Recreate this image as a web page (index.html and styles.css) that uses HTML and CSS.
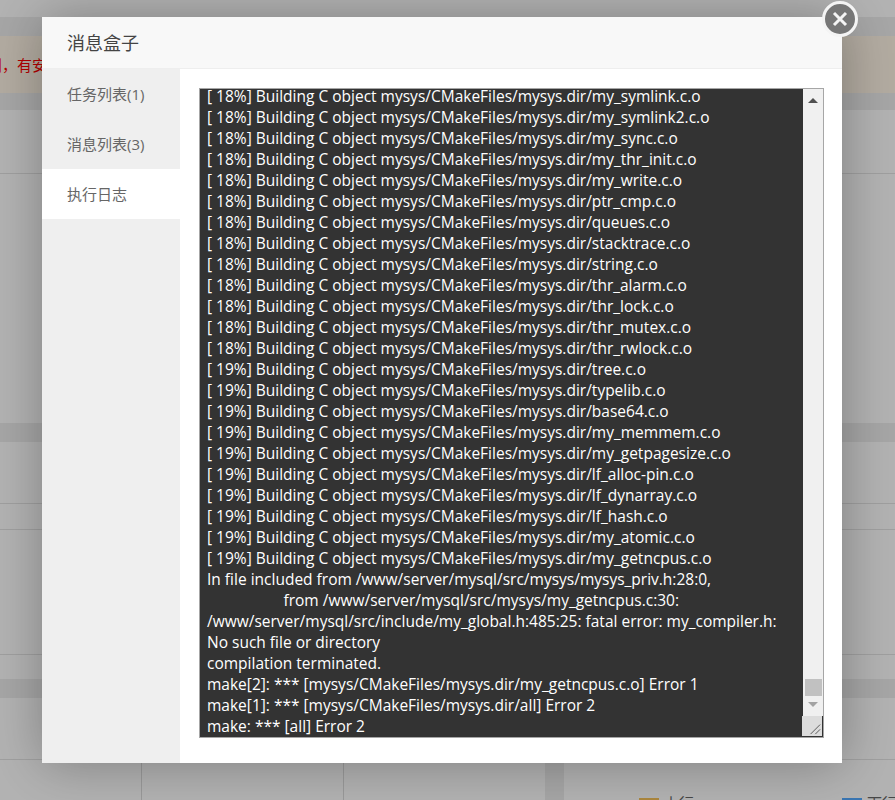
FILE: index.html
```html
<!DOCTYPE html>
<html lang="zh">
  <head>
    <meta charset="UTF-8" />
    <title>消息盒子</title>
    <link rel="stylesheet" href="styles.css">
  </head>
  <body>
    <div class="page">
      <div class="topbar"></div>
      <div class="notice">则，有安全风险，请尽快处理</div>
      <section class="card card-top">
        <div class="card-head"></div>
      </section>
      <section class="card card-mid">
        <div class="mid-head"></div>
        <div class="mid-sub"></div>
        <div class="mid-body"></div>
      </section>
      <div class="bottom-row">
        <section class="card">
          <div class="bottom-head"></div>
          <div class="stats">
            <div class="stat"></div>
            <div class="stat"></div>
            <div class="stat"></div>
          </div>
        </section>
        <section class="card">
          <div class="bottom-head"></div>
          <div class="legend">
            <span class="legend-item"><i class="swatch swatch-up"></i>上行</span>
            <span class="legend-item"><i class="swatch swatch-down"></i>下行</span>
          </div>
        </section>
      </div>
    </div>

    <div class="shade"></div>

    <div class="modal">
      <div class="modal-title">消息盒子</div>
      <div class="modal-main">
        <ul class="side-menu">
          <li>任务列表(1)</li>
          <li>消息列表(3)</li>
          <li class="active">执行日志</li>
        </ul>
        <div class="modal-content">
          <div class="log-box">
            <div class="log-view">
<pre class="log-text">[ 18%] Building C object mysys/CMakeFiles/mysys.dir/my_symlink.c.o
[ 18%] Building C object mysys/CMakeFiles/mysys.dir/my_symlink2.c.o
[ 18%] Building C object mysys/CMakeFiles/mysys.dir/my_sync.c.o
[ 18%] Building C object mysys/CMakeFiles/mysys.dir/my_thr_init.c.o
[ 18%] Building C object mysys/CMakeFiles/mysys.dir/my_write.c.o
[ 18%] Building C object mysys/CMakeFiles/mysys.dir/ptr_cmp.c.o
[ 18%] Building C object mysys/CMakeFiles/mysys.dir/queues.c.o
[ 18%] Building C object mysys/CMakeFiles/mysys.dir/stacktrace.c.o
[ 18%] Building C object mysys/CMakeFiles/mysys.dir/string.c.o
[ 18%] Building C object mysys/CMakeFiles/mysys.dir/thr_alarm.c.o
[ 18%] Building C object mysys/CMakeFiles/mysys.dir/thr_lock.c.o
[ 18%] Building C object mysys/CMakeFiles/mysys.dir/thr_mutex.c.o
[ 18%] Building C object mysys/CMakeFiles/mysys.dir/thr_rwlock.c.o
[ 19%] Building C object mysys/CMakeFiles/mysys.dir/tree.c.o
[ 19%] Building C object mysys/CMakeFiles/mysys.dir/typelib.c.o
[ 19%] Building C object mysys/CMakeFiles/mysys.dir/base64.c.o
[ 19%] Building C object mysys/CMakeFiles/mysys.dir/my_memmem.c.o
[ 19%] Building C object mysys/CMakeFiles/mysys.dir/my_getpagesize.c.o
[ 19%] Building C object mysys/CMakeFiles/mysys.dir/lf_alloc-pin.c.o
[ 19%] Building C object mysys/CMakeFiles/mysys.dir/lf_dynarray.c.o
[ 19%] Building C object mysys/CMakeFiles/mysys.dir/lf_hash.c.o
[ 19%] Building C object mysys/CMakeFiles/mysys.dir/my_atomic.c.o
[ 19%] Building C object mysys/CMakeFiles/mysys.dir/my_getncpus.c.o
In file included from /www/server/mysql/src/mysys/mysys_priv.h:28:0,
                   from /www/server/mysql/src/mysys/my_getncpus.c:30:
/www/server/mysql/src/include/my_global.h:485:25: fatal error: my_compiler.h:
No such file or directory
compilation terminated.
make[2]: *** [mysys/CMakeFiles/mysys.dir/my_getncpus.c.o] Error 1
make[1]: *** [mysys/CMakeFiles/mysys.dir/all] Error 2
make: *** [all] Error 2</pre>
            </div>
            <div class="scrollbar">
              <span class="arrow arrow-up"></span>
              <span class="thumb"></span>
              <span class="arrow arrow-down"></span>
            </div>
            <svg class="resizer" width="21" height="21" viewBox="0 0 21 21">
              <path d="M9 19 L19 9 M14 19 L19 14" stroke="#555" fill="none" />
            </svg>
          </div>
        </div>
      </div>
    </div>

    <svg class="modal-close" width="38" height="38" viewBox="0 0 38 38">
      <circle cx="19" cy="19" r="16.5" fill="#777" stroke="#f4f4f4" stroke-width="3" />
      <path d="M13 13 L25 25 M25 13 L13 25" stroke="#f4f4f4" stroke-width="3" fill="none" />
    </svg>
  </body>
</html>
```

FILE: styles.css
```css
* {
  box-sizing: border-box;
}

body {
  margin: 0;
  height: 800px;
  overflow: hidden;
  font-family: "Open Sans", "Noto Sans CJK SC", sans-serif;
  color: #333;
  background: #eee;
}

/* Страница под затемнением */
.topbar {
  height: 17px;
  margin-bottom: 19px;
  background: #fff;
}

.notice {
  height: 57px;
  padding-top: 18px;
  overflow: hidden;
  white-space: nowrap;
  font-size: 15px;
  color: #f00;
  background: #fff5e6;
  text-indent: -13px;
}

.card {
  background: #fff;
}

.card-top {
  height: 313px;
  margin-top: 17px;
}

.card-head {
  height: 64px;
  border-bottom: 1px solid #e4e4e4;
}

.card-mid {
  height: 237px;
  margin-top: 19px;
}

.mid-head {
  height: 62px;
  border-bottom: 1px solid #e4e4e4;
}

.mid-sub {
  height: 26px;
  border-bottom: 1px solid #e4e4e4;
}

.mid-body {
  height: 125px;
  border-bottom: 1px solid #e4e4e4;
}

.bottom-row {
  display: grid;
  grid-template-columns: 545px 331px;
  gap: 19px;
  margin-top: 19px;
  width: 895px;
}

.bottom-head {
  height: 62px;
  border-bottom: 1px solid #e4e4e4;
}

.stats {
  display: grid;
  grid-template-columns: 142px 202px 201px;
  height: 60px;
}

.stat {
  border-right: 1px solid #dcdcdc;
}

.stat:last-child {
  border-right: none;
}

.legend {
  display: flex;
  height: 60px;
  overflow: hidden;
  padding: 36px 0 0 75px;
  font-size: 15px;
  color: #666;
}

.legend-item {
  display: flex;
  flex: none;
  width: 203px;
  line-height: 15px;
}

.swatch {
  width: 20px;
  height: 12px;
  margin: 2px 5px 0 0;
}

.swatch-up {
  background: #f7c258;
}

.swatch-down {
  background: #52a9ff;
}

.shade {
  position: fixed;
  inset: 0;
  background: rgba(0, 0, 0, 0.3);
}

/* Окно */
.modal {
  position: fixed;
  left: 42px;
  top: 17px;
  width: 800px;
  height: 746px;
  display: flex;
  flex-direction: column;
  background: #fff;
  box-shadow: 1px 1px 50px rgba(0, 0, 0, 0.3);
}

.modal-title {
  height: 52px;
  padding: 0 25px;
  line-height: 52px;
  font-size: 18px;
  color: #444;
  background: #f8f8f8;
  border-bottom: 1px solid #eee;
}

.modal-main {
  flex: 1;
  display: flex;
  min-height: 0;
}

.side-menu {
  width: 138px;
  margin: 0;
  padding: 0;
  list-style: none;
  background: #efefef;
}

.side-menu li {
  height: 50px;
  padding-left: 25px;
  line-height: 50px;
  font-size: 15px;
  color: #666;
}

.side-menu li.active {
  background: #fff;
}

.modal-content {
  flex: 1;
  padding: 19px 18px 25px 19px;
}

/* Лог */
.log-box {
  position: relative;
  display: flex;
  height: 100%;
  border: 1px solid #a6a6a6;
  background: #333;
}

.log-view {
  flex: 1;
  display: flex;
  flex-direction: column;
  justify-content: flex-end;
  overflow: hidden;
  padding-left: 7px;
}

.log-text {
  margin: 0;
  font-family: "Open Sans", sans-serif;
  font-size: 15.5px;
  line-height: 21px;
  color: #fff;
  white-space: pre;
}

.scrollbar {
  display: flex;
  flex-direction: column;
  align-items: center;
  width: 20px;
  background: #f0f0f0;
}

.arrow {
  width: 0;
  height: 0;
  border-left: 5px solid transparent;
  border-right: 5px solid transparent;
}

.arrow-up {
  margin-top: 9px;
  border-bottom: 5px solid #505050;
}

.thumb {
  width: 17px;
  height: 17px;
  margin-top: auto;
  background: #c1c1c1;
}

.arrow-down {
  margin: 6px 0 30px;
  border-top: 5px solid #a3a3a3;
}

.resizer {
  position: absolute;
  right: 0;
  bottom: 0;
  background: #dcdcdc;
  border-right: 1px solid #333;
  border-bottom: 1px solid #333;
}

.modal-close {
  position: fixed;
  left: 821px;
  top: 0;
}
```
